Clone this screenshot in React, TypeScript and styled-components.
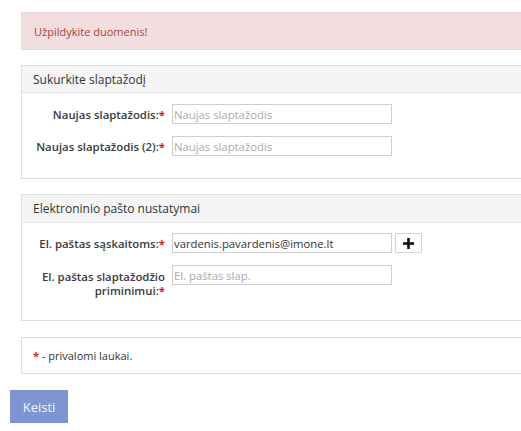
import React from 'react';
import styled, { createGlobalStyle } from 'styled-components';

const GlobalStyle = createGlobalStyle`
  html, body {
    margin: 0;
    padding: 0;
    background: #fff;
    overflow: hidden;
  }
  body {
    font-family: "Open Sans", "Liberation Sans", Arial, sans-serif;
    color: #333;
  }
  * { box-sizing: border-box; }
`;

const Page = styled.div`
  width: 620px;
  padding: 12px 0 0 10px;
  display: flex;
  flex-direction: column;
  align-items: flex-start;
`;

const Alert = styled.div`
  align-self: stretch;
  margin-left: 11px;
  height: 38px;
  display: flex;
  align-items: center;
  padding-left: 12px;
  background: #f2dede;
  border: 1px solid #ebd5d8;
  color: #a94442;
  font-size: 11px;
`;

const Panel = styled.section`
  align-self: stretch;
  margin: 15px 0 0 11px;
  border: 1px solid #dedede;
  background: #fff;
`;

const PanelHeading = styled.div<{ $h: number }>`
  height: ${(p) => p.$h}px;
  display: flex;
  align-items: center;
  padding-left: 11px;
  background: #f5f5f5;
  border-bottom: 1px solid #e3e3e3;
  font-size: 12px;
  color: #333;
`;

const PanelBody = styled.div<{ $top: number }>`
  padding: ${(p) => p.$top}px 0 22px 9px;
  display: grid;
  grid-template-columns: 134px 220px 27px;
  column-gap: 7px;
  row-gap: 12px;
  align-items: start;
`;

const Label = styled.label<{ $multi?: boolean }>`
  text-align: right;
  font-size: 11.4px;
  font-weight: 600;
  line-height: 14px;
  color: #3a3a3a;
  padding-top: ${(p) => (p.$multi ? 5 : 4)}px;
`;

const Req = styled.span`
  color: #e21b1b;
  font-weight: 700;
`;

const Input = styled.input`
  width: 220px;
  height: 20px;
  border: 1px solid #cfcfcf;
  border-radius: 0;
  padding: 0 1px;
  font-family: "Open Sans", "Liberation Sans", Arial, sans-serif;
  font-size: 11.3px;
  color: #333;
  outline: none;
  &::placeholder {
    color: #a9a9a9;
  }
`;

const AddButton = styled.button`
  width: 27px;
  height: 20px;
  margin-left: -4px;
  padding: 0;
  border: 1px solid #d4d4d4;
  background: #fff;
  display: flex;
  align-items: center;
  justify-content: center;
`;

const Note = styled.div`
  align-self: stretch;
  margin: 16px 0 0 11px;
  height: 37px;
  display: flex;
  align-items: center;
  padding-left: 11px;
  border: 1px solid #dedede;
  font-size: 11px;
  color: #333;
`;

const SubmitButton = styled.button`
  margin-top: 16px;
  width: 58px;
  height: 33px;
  border: none;
  background: #7f94d3;
  color: #f4f6fc;
  font-family: "Open Sans", "Liberation Sans", Arial, sans-serif;
  font-size: 13px;
  padding: 0;
`;

const PlusIcon = () => (
  <svg width="11" height="11" viewBox="0 0 11 11">
    <rect x="4.2" y="0" width="2.6" height="11" fill="#111" />
    <rect x="0" y="4.2" width="11" height="2.6" fill="#111" />
  </svg>
);

export default function App() {
  return (
    <>
      <GlobalStyle />
      <Page>
        <Alert>Užpildykite duomenis!</Alert>

        <Panel>
          <PanelHeading $h={27}>Sukurkite slaptažodį</PanelHeading>
          <PanelBody $top={11}>
            <Label>
              Naujas slaptažodis:<Req>*</Req>
            </Label>
            <Input type="password" placeholder="Naujas slaptažodis" />
            <span />
            <Label>
              Naujas slaptažodis (2):<Req>*</Req>
            </Label>
            <Input type="password" placeholder="Naujas slaptažodis" />
            <span />
          </PanelBody>
        </Panel>

        <Panel>
          <PanelHeading $h={28}>Elektroninio pašto nustatymai</PanelHeading>
          <PanelBody $top={10}>
            <Label>
              El. paštas sąskaitoms:<Req>*</Req>
            </Label>
            <Input type="text" defaultValue="vardenis.pavardenis@imone.lt" />
            <AddButton type="button">
              <PlusIcon />
            </AddButton>
            <Label $multi>
              El. paštas slaptažodžio priminimui:<Req>*</Req>
            </Label>
            <Input type="text" placeholder="El. paštas slap." />
            <span />
          </PanelBody>
        </Panel>

        <Note>
          <Req>*</Req>&nbsp;- privalomi laukai.
        </Note>

        <SubmitButton type="button">Keisti</SubmitButton>
      </Page>
    </>
  );
}
